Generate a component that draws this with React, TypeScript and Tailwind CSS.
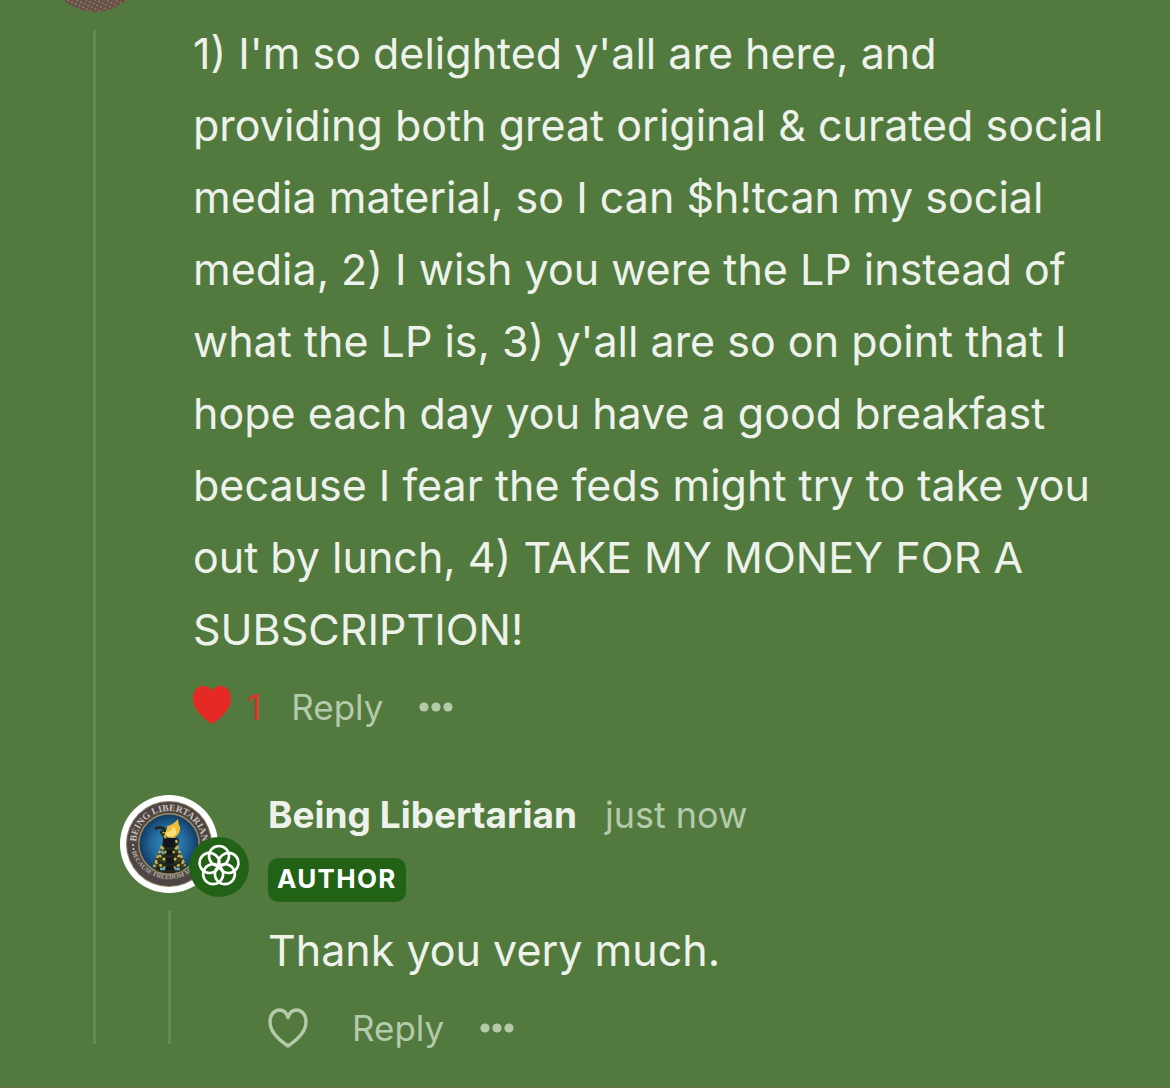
import type { ReactNode } from 'react';

const FLOWER_ANGLES = [0, 72, 144, 216, 288];

function HeartIcon() {
  return (
    <svg viewBox="0 0 40 40" className="size-10" aria-hidden="true">
      <path
        d="M20 38C14 34 2 25 2 14C2 7 6 2 11.500 2C15.500 2 18.500 4.500 20 9.500C21.500 4.500 24.500 2 28.500 2C34 2 38 7 38 14C38 25 26 34 20 38Z"
        fill="none"
        stroke="currentColor"
        strokeWidth="3.400"
        strokeLinejoin="round"
      />
    </svg>
  );
}

function HeartFilledIcon() {
  return (
    <svg viewBox="2 2 36 36" className="size-[38px]" aria-hidden="true">
      <path
        d="M20 38C14 34 2 25 2 14C2 7 6 2 11.500 2C15.500 2 18.800 3.800 20 7C21.200 3.800 24.500 2 28.500 2C34 2 38 7 38 14C38 25 26 34 20 38Z"
        fill="currentColor"
      />
    </svg>
  );
}

function DotsIcon() {
  return (
    <svg viewBox="0 0 34 10" className="h-[10px] w-[34px]" fill="currentColor" aria-hidden="true">
      <circle cx="5" cy="5" r="4.600" />
      <circle cx="17" cy="5" r="4.600" />
      <circle cx="29" cy="5" r="4.600" />
    </svg>
  );
}

function PublicationLogo() {
  return (
    <svg viewBox="0 0 98 98" className="size-[98px]" role="img" aria-label="Being Libertarian">
      <defs>
        <radialGradient id="sky">
          <stop offset="0" stopColor="#3d8fc0" />
          <stop offset="0.6" stopColor="#22689c" />
          <stop offset="1" stopColor="#123c63" />
        </radialGradient>
        <path id="arc-top" d="M17 57A33 33 0 1 1 81 57" />
        <path id="arc-bottom" d="M11 54A39 39 0 0 0 87 54" />
      </defs>
      <circle cx="49" cy="49" r="49" fill="#fff" />
      <circle cx="49" cy="49" r="43" fill="#8c8064" />
      <circle cx="49" cy="49" r="42" fill="#4c4543" />
      <circle cx="49" cy="49" r="31" fill="#9a8b5d" />
      <circle cx="49" cy="49" r="29.500" fill="url(#sky)" />
      <text fill="#c9c2ba" fontSize="9.500" fontWeight="700" fontFamily="Liberation Serif, serif">
        <textPath href="#arc-top" startOffset="50%" textAnchor="middle">
          BEING LIBERTARIAN
        </textPath>
      </text>
      <text fill="#b5afa5" fontSize="6.500" fontWeight="700" fontFamily="Liberation Serif, serif">
        <textPath href="#arc-bottom" startOffset="50%" textAnchor="middle">
          BECAUSE FREEDOM MATTERS
        </textPath>
      </text>
      <circle cx="13" cy="50" r="1" fill="#d8d2ca" />
      <circle cx="13.500" cy="54" r="1" fill="#d8d2ca" />
      {/* torch and the snake wound round it */}
      <path d="M43 44L42 52L37 61L33 71L36 76Q49 80 62 76L66 70L61 60L56 52L57 44Z" fill="#35391f" />
      <path d="M43 43H56V53L54 54V78H46V54L43 52Z" fill="#10151a" />
      <path d="M44 42L43 36Q48 37 47 31Q53 30 58 24Q58 29 60 32Q61 38 54 43Z" fill="#f2bd31" />
      <path d="M47 41L45 37Q51 38 53 31Q57 34 56 39L52 42Z" fill="#f8e17b" />
      <path
        d="M35 34Q40 31 44 34Q46 38 40 37M44 37Q41 41 47 43M56 43Q60 47 55 50M42 51Q47 57 57 52M39 58Q48 65 60 58M35 66Q49 74 64 66M37 73Q49 80 61 73"
        fill="none"
        stroke="#20271c"
        strokeWidth="3"
      />
      <path
        d="M46 43Q43 39 44 37M56 45L57 48M42 51L38 61L34 72M57 51L61 61L65 71M42 52L46 58M57 52L53 58M39 60L45 65M60 60L54 65M35 67L45 73M64 67L54 73"
        fill="none"
        stroke="#c2b44c"
        strokeWidth="2.400"
        strokeDasharray="3 2"
      />
      <path d="M40 74H45M55 74H60M41 56L44 59" stroke="#6ba2bd" strokeWidth="2.500" />
    </svg>
  );
}

function FlowerBadge() {
  return (
    <svg viewBox="0 0 60 60" className="absolute -right-[31px] -bottom-1 size-[60px]" aria-hidden="true">
      <circle cx="30" cy="30" r="30" fill="#226216" />
      <g fill="none" stroke="#fff" strokeWidth="2.600">
        {FLOWER_ANGLES.map((angle) => (
          <circle key={angle} cx="30" cy="19" r="10" transform={`rotate(${angle} 30 29)`} />
        ))}
      </g>
    </svg>
  );
}

function ParentAvatar() {
  return (
    <svg viewBox="0 0 98 98" className="size-[98px] shrink-0" aria-hidden="true">
      <defs>
        <pattern id="weave" width="4" height="4" patternUnits="userSpaceOnUse" patternTransform="rotate(25)">
          <rect width="4" height="4" fill="#665043" />
          <rect width="2" height="2" fill="#8a7366" />
        </pattern>
      </defs>
      <circle cx="49" cy="49" r="49" fill="url(#weave)" />
    </svg>
  );
}

function CommentText({ children }: { children: ReactNode }) {
  return <p className="text-[43px] leading-[72px] text-[#edf2eb]">{children}</p>;
}

export default function App() {
  return (
    <main className="flex min-h-screen flex-col border-b border-[#6b6845] bg-[#527a3f] font-['Inter',sans-serif] text-[#b5caab]">
      <div className="flex h-3 items-end overflow-hidden pl-[46px]">
        <ParentAvatar />
      </div>
      <article className="flex">
        <div className="mt-[18px] mb-1 ml-[93px] w-[3px] shrink-0 bg-[#628d52]" />
        <div className="flex-1 pt-[5px]">
          <div className="pr-10 pl-[97px]">
            <CommentText>
              1) I'm so delighted y'all are here, and providing both great original &amp; curated social
              media material, so I can $h!tcan my social media, 2) I wish you were the LP instead of what the LP is, 3)
              y'all are so on point that I hope each day you have a good breakfast because I fear the feds might try
              to take you out by lunch, 4) TAKE MY MONEY FOR A SUBSCRIPTION!
            </CommentText>
            <div className="mt-[18px] flex h-12 items-center text-[35px] leading-[48px]">
              <button type="button" aria-label="Unlike" className="mb-1 text-[#e52a26]">
                <HeartFilledIcon />
              </button>
              <span className="ml-4 text-[#e0342b]">1</span>
              <button type="button" className="ml-[30px]">
                Reply
              </button>
              <button type="button" aria-label="More" className="ml-9">
                <DotsIcon />
              </button>
            </div>
          </div>

          <article className="mt-16 ml-6 flex">
            <div className="flex w-[98px] shrink-0 flex-col items-center">
              <div className="relative">
                <PublicationLogo />
                <FlowerBadge />
              </div>
              <div className="mt-[18px] mb-1 w-[3px] flex-1 bg-[#628d52]" />
            </div>
            <div className="ml-[50px] flex-1">
              <div className="flex h-10 items-baseline text-[36px] leading-[40px]">
                <a href="#author" className="text-[37px] font-bold text-[#edf2eb]">
                  Being Libertarian
                </a>
                <span className="ml-7">just now</span>
              </div>
              <div className="mt-[23px] flex">
                <span className="h-11 rounded-[10px] bg-[#226216] px-[9px] text-[26px] leading-[42px] font-bold tracking-wider text-white">
                  AUTHOR
                </span>
              </div>
              <div className="mt-3">
                <CommentText>Thank you very much.</CommentText>
              </div>
              <div className="mt-[22px] flex h-10 items-center text-[35px] leading-[40px]">
                <button type="button" aria-label="Like">
                  <HeartIcon />
                </button>
                <button type="button" className="ml-11">
                  Reply
                </button>
                <button type="button" aria-label="More" className="ml-9">
                  <DotsIcon />
                </button>
              </div>
            </div>
          </article>
        </div>
      </article>
    </main>
  );
}
